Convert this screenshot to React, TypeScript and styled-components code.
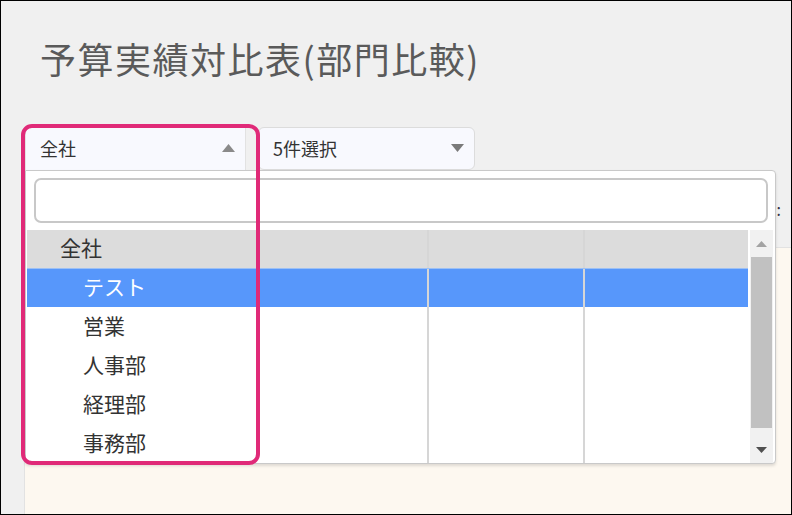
import React from "react";
import styled, { createGlobalStyle } from "styled-components";

const Global = createGlobalStyle`
  html, body { margin: 0; padding: 0; }
  body { font-family: "Noto Sans CJK JP", "Noto Sans", sans-serif; }
  * { box-sizing: border-box; }
`;

const Page = styled.div`
  width: 792px;
  height: 515px;
  border: 1px solid #000;
  background: #f0f0f0;
  display: flex;
  flex-direction: column;
  overflow: hidden;
  position: relative;
`;

const Title = styled.h1`
  margin: 0;
  padding: 33px 0 0 39px;
  font-size: 36px;
  line-height: 48px;
  font-weight: 400;
  color: #5a5a5a;
  letter-spacing: 1.5px;
`;

const Toolbar = styled.div`
  display: flex;
  gap: 12px;
  margin-top: 45px;
  padding-left: 24px;
  height: 43px;
`;

const SelectWrap = styled.div`
  position: relative;
`;

const SelectBox = styled.div<{ $w: number; $open?: boolean }>`
  width: ${(p) => p.$w}px;
  height: 43px;
  background: #f8f9fe;
  border: 1px solid ${(p) => (p.$open ? "#e2e2e2" : "#dcdcdc")};
  border-radius: ${(p) => (p.$open ? "6px 0 0 0" : "6px")};
  border-bottom: ${(p) => (p.$open ? "none" : "1px solid #dcdcdc")};
  display: flex;
  align-items: center;
  justify-content: space-between;
  padding: 0 10px 2px 14px;
  font-size: 18px;
  color: #333;
`;

const Strip = styled.div`
  height: 77px;
  display: flex;
  justify-content: flex-end;
  align-items: center;
  padding-right: 10px;
  font-size: 16px;
  color: #334;
`;

const Panel = styled.div`
  flex: 1;
  margin-left: 23px;
  background: #fdf8f0;
  border-top: 1px solid #e2e2e2;
  border-left: 1px solid #e2e2e2;
`;

const Popup = styled.div`
  position: absolute;
  top: 100%;
  left: 0;
  width: 751px;
  height: 294px;
  background: #fff;
  border: 1px solid #c9c9c9;
  border-radius: 0 4px 4px 4px;
  box-shadow: 0 2px 3px rgba(0, 0, 0, 0.12);
  display: flex;
  flex-direction: column;
  z-index: 5;
`;

const Search = styled.div`
  margin: 7px 7px 0 8px;
  height: 45px;
  border: 2px solid #c8c8c8;
  border-radius: 7px;
  background: #fff;
`;

const ListArea = styled.div`
  margin: 7px 2px 0 1px;
  height: 233px;
  display: flex;
`;

const Rows = styled.div`
  flex: 1;
  display: flex;
  flex-direction: column;
`;

const cols = "402px 156px 1fr";

const Row = styled.div<{ $kind: "head" | "sel" | "normal" }>`
  height: ${(p) => (p.$kind === "head" ? 38 : 39)}px;
  flex-shrink: 0;
  display: grid;
  grid-template-columns: ${cols};
  background: ${(p) =>
    p.$kind === "head" ? "#dcdcdc" : p.$kind === "sel" ? "#5797fb" : "#fff"};
  color: ${(p) => (p.$kind === "sel" ? "#fff" : "#333")};
  border-top: ${(p) => (p.$kind === "sel" ? "1px solid #9cc0f5" : "none")};
`;

const Cell = styled.div<{ $indent?: number }>`
  display: flex;
  align-items: center;
  padding-left: ${(p) => p.$indent ?? 0}px;
  padding-bottom: 4px;
  font-size: 21px;
  border-right: 2px solid #d6d6d6;
  &:last-child { border-right: none; }
`;

const Filler = styled.div`
  flex: 1;
  display: grid;
  grid-template-columns: ${cols};
`;

const FillCell = styled.div`
  border-right: 2px solid #d6d6d6;
  &:last-child { border-right: none; }
`;

const Scrollbar = styled.div`
  width: 23px;
  margin-left: 2px;
  background: #f1f1f1;
  display: flex;
  flex-direction: column;
  align-items: center;
`;

const ScrollBtn = styled.div`
  height: 27px;
  width: 100%;
  display: flex;
  align-items: center;
  justify-content: center;
`;

const Thumb = styled.div`
  width: 21px;
  height: 171px;
  background: #c1c1c1;
`;

const Spacer = styled.div`
  flex: 1;
`;

const Highlight = styled.div`
  position: absolute;
  left: 20px;
  top: 123px;
  width: 239px;
  height: 341px;
  border: 4px solid #e02a78;
  border-radius: 11px;
  pointer-events: none;
  z-index: 10;
`;

const Tri = ({ up, color, w = 12, h = 7 }: { up?: boolean; color: string; w?: number; h?: number }) => (
  <svg width={w} height={h} viewBox={`0 0 ${w} ${h}`}>
    <polygon
      points={up ? `0,${h} ${w / 2},0 ${w},${h}` : `0,0 ${w},0 ${w / 2},${h}`}
      fill={color}
    />
  </svg>
);

const items = [
  { label: "テスト", kind: "sel" as const, indent: 56 },
  { label: "営業", kind: "normal" as const, indent: 56 },
  { label: "人事部", kind: "normal" as const, indent: 56 },
  { label: "経理部", kind: "normal" as const, indent: 56 },
  { label: "事務部", kind: "normal" as const, indent: 56 },
];

export default function App() {
  return (
    <>
      <Global />
      <Page>
        <Title>予算実績対比表(部門比較)</Title>
        <Toolbar>
          <SelectWrap>
            <SelectBox $w={221} $open>
              <span>全社</span>
              <Tri up color="#8a8a8a" w={13} h={8} />
            </SelectBox>
            <Popup>
              <Search />
              <ListArea>
                <Rows>
                  <Row $kind="head">
                    <Cell $indent={33}>全社</Cell>
                    <Cell />
                    <Cell />
                  </Row>
                  {items.map((it) => (
                    <Row key={it.label} $kind={it.kind}>
                      <Cell $indent={it.indent}>{it.label}</Cell>
                      <Cell />
                      <Cell />
                    </Row>
                  ))}
                  <Filler>
                    <FillCell />
                    <FillCell />
                    <FillCell />
                  </Filler>
                </Rows>
                <Scrollbar>
                  <ScrollBtn>
                    <Tri up color="#a3a3a3" w={11} h={6} />
                  </ScrollBtn>
                  <Thumb />
                  <Spacer />
                  <ScrollBtn>
                    <Tri color="#505050" w={11} h={6} />
                  </ScrollBtn>
                </Scrollbar>
              </ListArea>
            </Popup>
          </SelectWrap>
          <SelectBox $w={217}>
            <span>5件選択</span>
            <Tri color="#7a7a7a" w={13} h={8} />
          </SelectBox>
        </Toolbar>
        <Strip>:</Strip>
        <Panel />
        <Highlight />
      </Page>
    </>
  );
}
